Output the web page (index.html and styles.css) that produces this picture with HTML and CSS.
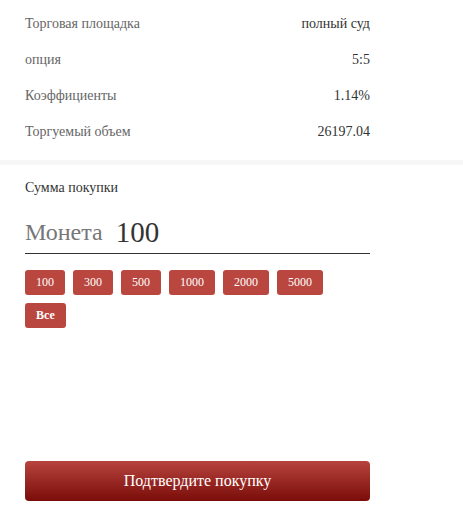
FILE: index.html
```html
<!DOCTYPE html>
<html>
<head>
    <title>Покупка</title>
    <link rel="stylesheet" href="styles.css">
</head>
<body>
    <div class="info">
        <div class="row"><span class="label">Торговая площадка</span><span class="value">полный суд</span></div>
        <div class="row"><span class="label">опция</span><span class="value">5:5</span></div>
        <div class="row"><span class="label">Коэффициенты</span><span class="value">1.14%</span></div>
        <div class="row"><span class="label">Торгуемый объем</span><span class="value">26197.04</span></div>
    </div>
    <div class="divider"></div>
    <div class="buy">
        <div class="buy-title">Сумма покупки</div>
        <div class="amount">
            <span class="coin">Монета</span>
            <span class="amount-value">100</span>
        </div>
        <div class="chips">
            <button class="chip">100</button>
            <button class="chip">300</button>
            <button class="chip">500</button>
            <button class="chip">1000</button>
            <button class="chip">2000</button>
            <button class="chip">5000</button>
            <button class="chip chip-all">Все</button>
        </div>
        <button class="confirm">Подтвердите покупку</button>
    </div>
</body>
</html>
```

FILE: styles.css
```css
body {
    margin: 0;
    font-family: "Liberation Serif", "Times New Roman", serif;
    background-color: #fff;
    color: #333;
}

.info {
    width: 345px;
    padding: 6px 0 0 25px;
}

.row {
    display: flex;
    justify-content: space-between;
    height: 36px;
    line-height: 36px;
    font-size: 14px;
}

.label {
    color: #666;
}

.value {
    color: #333;
}

.divider {
    height: 5px;
    margin-top: 10px;
    background-color: #f7f7f7;
}

.buy {
    width: 345px;
    padding: 13px 0 0 25px;
}

.buy-title {
    font-size: 14px;
    line-height: 20px;
    color: #333;
}

.amount {
    display: flex;
    align-items: flex-end;
    margin-top: 19px;
    padding-bottom: 6px;
    border-bottom: 1px solid #333;
}

.coin {
    font-size: 24px;
    line-height: 24px;
    color: #777;
    margin-bottom: 3px;
    margin-right: 13px;
}

.amount-value {
    font-size: 29px;
    line-height: 30px;
    color: #333;
}

.chips {
    display: flex;
    flex-wrap: wrap;
    gap: 8px;
    margin-top: 16px;
    width: 320px;
}

.chip {
    height: 25px;
    padding: 0 11px;
    border: none;
    border-radius: 3px;
    background-color: #b9473f;
    color: #fff;
    font-family: "Liberation Serif", "Times New Roman", serif;
    font-size: 12px;
}

.chip-all {
    font-weight: bold;
}

.confirm {
    display: block;
    width: 345px;
    height: 40px;
    margin-top: 133px;
    border: none;
    border-radius: 4px;
    background: linear-gradient(to bottom, #b7433e, #7a0d09);
    color: #fff;
    font-family: "Liberation Serif", "Times New Roman", serif;
    font-size: 16px;
}
```
